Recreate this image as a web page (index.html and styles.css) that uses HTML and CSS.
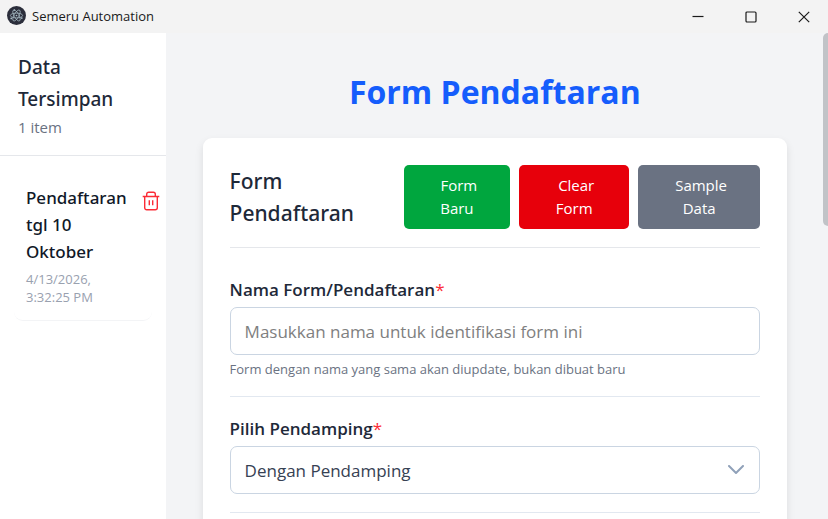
FILE: index.html
```html
<!DOCTYPE html>
<html lang="id">
<head>
    <meta charset="UTF-8">
    <meta name="viewport" content="width=device-width, initial-scale=1.0">
    <title>Semeru Automation</title>
    <link rel="stylesheet" href="styles.css">
</head>
<body>
    <header class="titlebar">
        <svg class="app-icon" viewBox="0 0 18 18" aria-hidden="true">
            <circle cx="9" cy="9" r="9" fill="#2b2e3b"/>
            <g fill="none" stroke="#a9bdc6" stroke-width="0.7">
                <ellipse cx="9" cy="9" rx="5.8" ry="2.3"/>
                <ellipse cx="9" cy="9" rx="5.8" ry="2.3" transform="rotate(60 9 9)"/>
                <ellipse cx="9" cy="9" rx="5.8" ry="2.3" transform="rotate(120 9 9)"/>
            </g>
            <g fill="#a9bdc6">
                <circle cx="9" cy="9" r="0.8"/>
                <circle cx="4" cy="11.8" r="0.8"/>
                <circle cx="14" cy="11.4" r="0.8"/>
                <circle cx="7" cy="3.8" r="0.8"/>
            </g>
        </svg>
        <span class="app-name">Semeru Automation</span>
        <div class="window-controls">
            <button type="button" aria-label="Minimize">
                <svg viewBox="0 0 12 12"><path d="M0.5 5.5h11"/></svg>
            </button>
            <button type="button" aria-label="Maximize">
                <svg viewBox="0 0 12 12"><rect x="1" y="1" width="10" height="10" rx="1"/></svg>
            </button>
            <button type="button" aria-label="Close">
                <svg viewBox="0 0 12 12"><path d="M0.8 0.8l10.4 10.4M11.2 0.8L0.8 11.2"/></svg>
            </button>
        </div>
    </header>

    <div class="container">
        <aside class="sidebar">
            <div class="sidebar-header">
                <h2>Data Tersimpan</h2>
                <p>1 item</p>
            </div>
            <ul class="saved-list">
                <li class="saved-item">
                    <div class="saved-info">
                        <h3>Pendaftaran tgl 10 Oktober</h3>
                        <p>4/13/2026, 3:32:25 PM</p>
                    </div>
                    <button type="button" class="delete-btn" aria-label="Hapus">
                        <svg viewBox="0 0 18 20">
                            <path d="M0.7 5.5h16.6M2.7 5.5v11.3a2 2 0 0 0 2 2h8.6a2 2 0 0 0 2-2V5.5M4.7 5.5V3.2a2 2 0 0 1 2-2h4.6a2 2 0 0 1 2 2v2.3M7.3 9.3v5M10.7 9.3v5"/>
                        </svg>
                    </button>
                </li>
            </ul>
        </aside>

        <main class="content">
            <h1>Form Pendaftaran</h1>
            <form class="card">
                <div class="card-header">
                    <h2>Form Pendaftaran</h2>
                    <div class="actions">
                        <button type="button" class="btn btn-new">&nbsp;Form<br>Baru</button>
                        <button type="button" class="btn btn-clear">&nbsp;Clear<br>Form</button>
                        <button type="button" class="btn btn-sample">&nbsp;Sample<br>Data</button>
                    </div>
                </div>

                <div class="form-group">
                    <label for="namaForm">Nama Form/Pendaftaran<span class="required">*</span></label>
                    <input type="text" id="namaForm" placeholder="Masukkan nama untuk identifikasi form ini">
                    <p class="hint">Form dengan nama yang sama akan diupdate, bukan dibuat baru</p>
                </div>

                <div class="form-group">
                    <label for="pendamping">Pilih Pendamping<span class="required">*</span></label>
                    <div class="select-wrap">
                        <select id="pendamping">
                            <option>Dengan Pendamping</option>
                            <option>Tanpa Pendamping</option>
                        </select>
                        <svg class="chevron" viewBox="0 0 16 10" aria-hidden="true"><path d="M1 1l7 7 7-7"/></svg>
                    </div>
                </div>
            </form>
        </main>
        <div class="scroll-thumb"></div>
    </div>
</body>
</html>
```

FILE: styles.css
```css
* {
    margin: 0;
    padding: 0;
    box-sizing: border-box;
}

body {
    font-family: "Segoe UI", "Open Sans", sans-serif;
    font-size: 17px;
    background-color: #f3f4f6;
    color: #1e2939;
    display: flex;
    flex-direction: column;
    height: 100vh;
    overflow: hidden;
}

button,
input,
select {
    font: inherit;
}

.titlebar {
    display: flex;
    align-items: flex-start;
    height: 33px;
    flex-shrink: 0;
    padding-left: 7px;
    background-color: #f3f3f3;
    color: #1a1a1a;
}

.app-icon {
    width: 19px;
    height: 19px;
    margin: 6px 6px 0 0;
}

.app-name {
    font-size: 13px;
    line-height: 32px;
}

.window-controls {
    display: flex;
    margin-left: auto;
    margin-right: -2px;
}

.window-controls button {
    width: 53px;
    height: 32px;
    border: none;
    background: none;
}

.window-controls svg {
    width: 12px;
    height: 12px;
    fill: none;
    stroke: #1a1a1a;
    stroke-width: 1.2;
}

.container {
    position: relative;
    display: flex;
    flex: 1;
    min-height: 0;
}

.sidebar {
    width: 20%;
    background-color: white;
}

.sidebar-header {
    padding: 18px 18px 16px;
    border-bottom: 1px solid #e5e7eb;
}

h2,
h3 {
    font-family: "Segoe UI", "Noto Sans", sans-serif;
    font-weight: 500;
}

.sidebar-header h2 {
    font-size: 19px;
    line-height: 32px;
}

.card-header h2 {
    font-size: 21px;
    line-height: 32px;
}

.sidebar-header p {
    color: #6a7282;
    font-size: 15px;
    line-height: 24px;
}

.saved-list {
    list-style: none;
    padding: 14px;
}

.saved-item {
    display: flex;
    align-items: flex-start;
    justify-content: space-between;
    gap: 14px;
    padding: 14px 0 14px 12px;
    border-bottom: 1px solid #f3f4f6;
    border-radius: 9px;
}

.saved-info h3 {
    font-size: 17px;
    line-height: 27px;
    color: #101828;
}

.saved-info p {
    margin-top: 5px;
    font-size: 13px;
    line-height: 18px;
    color: #99a1af;
}

.delete-btn {
    border: none;
    background: none;
    margin: 7px -8px 0 0;
}

.delete-btn svg {
    display: block;
    width: 18px;
    height: 20px;
    fill: none;
    stroke: #fb2c36;
    stroke-width: 1.4;
}

.content {
    flex: 1;
    min-width: 0;
    padding: 36px 41px 36px 37px;
}

h1 {
    margin-bottom: 23px;
    font-size: 32px;
    line-height: 46px;
    text-align: center;
    color: #155dfc;
}

.card {
    background-color: white;
    border-radius: 9px;
    padding: 27px;
    box-shadow: 0 4px 8px rgba(0, 0, 0, 0.1);
}

.card-header {
    display: flex;
    align-items: center;
    justify-content: space-between;
    gap: 18px;
    padding-bottom: 18px;
    margin-bottom: 10px;
    border-bottom: 1px solid #e5e7eb;
}

.actions {
    display: flex;
    flex-shrink: 0;
    gap: 9px;
}

.btn {
    padding: 9px 33px;
    border: none;
    border-radius: 5px;
    font-size: 15px;
    line-height: 23px;
    color: white;
    cursor: pointer;
}

.btn-new {
    background-color: #00a63e;
}

.btn-clear {
    padding: 9px 35px;
    background-color: #e7000b;
}

.btn-sample {
    background-color: #6a7282;
}

.form-group {
    padding: 18px 0;
    border-bottom: 1px solid #e2e8f0;
}

.form-group label {
    display: block;
    margin-bottom: 4px;
    font-weight: 600;
    line-height: 27px;
}

.required {
    color: #fb2c36;
    font-weight: 400;
}

.form-group input,
.form-group select {
    display: block;
    width: 100%;
    height: 48px;
    padding: 0 14px;
    border: 1px solid #cad5e2;
    border-radius: 7px;
    background-color: white;
    color: #364153;
    appearance: none;
}

.form-group input::placeholder {
    color: #808080;
}

.hint {
    margin-top: 5px;
    font-size: 13px;
    line-height: 18px;
    color: #6a7282;
}

.select-wrap {
    position: relative;
}

.chevron {
    position: absolute;
    top: 19px;
    right: 16px;
    width: 16px;
    height: 10px;
    fill: none;
    stroke: #90a1b9;
    stroke-width: 2;
    stroke-linecap: round;
    stroke-linejoin: round;
    pointer-events: none;
}

/* overlay scrollbar of the form area */
.scroll-thumb {
    position: absolute;
    top: 0;
    right: 0;
    width: 5px;
    height: 193px;
    border-radius: 5px 0 0 5px;
    background-color: #c1c3c7;
}
```
